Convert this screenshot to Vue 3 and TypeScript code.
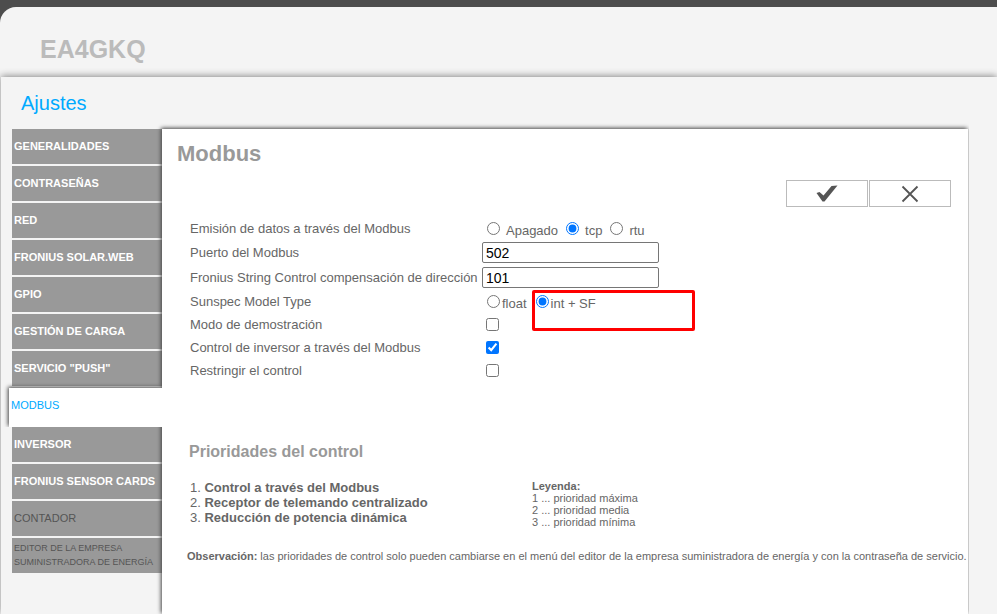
<script setup lang="ts">
import { ref } from 'vue'

interface MenuItem {
  label: string
  kind?: 'active' | 'locked' | 'small'
}

const menu: MenuItem[] = [
  { label: 'GENERALIDADES' },
  { label: 'CONTRASEÑAS' },
  { label: 'RED' },
  { label: 'FRONIUS SOLAR.WEB' },
  { label: 'GPIO' },
  { label: 'GESTIÓN DE CARGA' },
  { label: 'SERVICIO "PUSH"' },
  { label: 'MODBUS', kind: 'active' },
  { label: 'INVERSOR' },
  { label: 'FRONIUS SENSOR CARDS' },
  { label: 'CONTADOR', kind: 'locked' },
  { label: 'EDITOR DE LA EMPRESA SUMINISTRADORA DE ENERGÍA', kind: 'small' },
]

const output = ref('tcp')
const port = ref('502')
const offset = ref('101')
const model = ref('int')
const demo = ref(false)
const inverterControl = ref(true)
const restrict = ref(false)

const priorities = [
  'Control a través del Modbus',
  'Receptor de telemando centralizado',
  'Reducción de potencia dinámica',
]
const legend = ['1 ... prioridad máxima', '2 ... prioridad media', '3 ... prioridad mínima']
</script>

<template>
  <div class="sheet">
    <header class="brand">EA4GKQ</header>
    <div class="frame">
      <h1 class="page-title">Ajustes</h1>
      <div class="columns">
        <nav class="menu">
          <a v-for="item in menu" :key="item.label" href="#" class="item" :class="item.kind">{{ item.label }}</a>
        </nav>
        <main class="panel">
          <h2 class="title">Modbus</h2>
          <div class="actions">
            <button type="button" class="action" aria-label="Aceptar">
              <svg width="22" height="17" viewBox="0 0 22 17">
                <path d="M0.5 8 3.5 7 7.5 10.5 15.5 1 21.5 0.5 8.5 16.5 6.5 16.5Z" fill="#555" />
              </svg>
            </button>
            <button type="button" class="action" aria-label="Cancelar">
              <svg width="18" height="18" viewBox="0 0 18 18">
                <path d="M1.5 1.5 16.5 16.5M16.5 1.5 1.5 16.5" stroke="#555" stroke-width="1.8" fill="none" />
              </svg>
            </button>
          </div>

          <form class="form" @submit.prevent>
            <div class="row" role="radiogroup" aria-labelledby="output-label">
              <span id="output-label" class="name">Emisión de datos a través del Modbus</span>
              <div class="radios spaced">
                <label><input v-model="output" type="radio" name="output" value="off" /><span>Apagado</span></label>
                <label><input v-model="output" type="radio" name="output" value="tcp" /><span>tcp</span></label>
                <label><input v-model="output" type="radio" name="output" value="rtu" /><span>rtu</span></label>
              </div>
            </div>
            <div class="row tall">
              <label class="name" for="port">Puerto del Modbus</label>
              <input id="port" v-model="port" class="text" type="text" />
            </div>
            <div class="row tall">
              <label class="name" for="offset">Fronius String Control compensación de dirección</label>
              <input id="offset" v-model="offset" class="text" type="text" />
            </div>
            <div class="row" role="radiogroup" aria-labelledby="model-label">
              <span id="model-label" class="name">Sunspec Model Type</span>
              <div class="radios">
                <label><input v-model="model" type="radio" name="model" value="float" /><span>float</span></label>
                <label><input v-model="model" type="radio" name="model" value="int" /><span>int + SF</span></label>
                <span class="marker"></span>
              </div>
            </div>
            <div class="row">
              <label class="name" for="demo">Modo de demostración</label>
              <input id="demo" v-model="demo" class="check" type="checkbox" />
            </div>
            <div class="row">
              <label class="name" for="inverter">Control de inversor a través del Modbus</label>
              <input id="inverter" v-model="inverterControl" class="check" type="checkbox" />
            </div>
            <div class="row">
              <label class="name" for="restrict">Restringir el control</label>
              <input id="restrict" v-model="restrict" class="check" type="checkbox" />
            </div>
          </form>

          <h3 class="subtitle">Prioridades del control</h3>
          <div class="priority">
            <ol class="order">
              <li v-for="(name, i) in priorities" :key="name">{{ i + 1 }}. <b>{{ name }}</b></li>
            </ol>
            <div class="legend">
              <b>Leyenda:</b>
              <div v-for="line in legend" :key="line">{{ line }}</div>
            </div>
          </div>
          <p class="note">
            <b>Observación:</b> las prioridades de control solo pueden cambiarse en el menú del editor de la empresa
            suministradora de energía y con la contraseña de servicio.
          </p>
        </main>
      </div>
    </div>
  </div>
</template>

<style>
html {
  background: #4d4d4d;
}
body {
  overflow: hidden;
}
</style>

<style scoped>
.sheet {
  display: flex;
  flex-direction: column;
  box-sizing: border-box;
  min-height: calc(100vh - 7px);
  margin-top: 7px;
  border-top-left-radius: 16px;
  background: #f4f4f4;
  color: #666;
  font-family: 'Liberation Sans', Arial, sans-serif;
  font-size: 13px;
}
.brand {
  padding: 26px 40px 12px;
  color: #bbb;
  font-size: 25px;
  line-height: 32px;
  font-weight: bold;
}
.frame {
  display: flex;
  flex: 1;
  flex-direction: column;
  margin-left: 1px;
  background: #f4f4f4;
  box-shadow: 0 -1px 7px #888;
}
.page-title {
  margin: 0;
  padding: 14px 20px;
  color: #0af;
  font-size: 20px;
  line-height: 24px;
  font-weight: normal;
}
.columns {
  display: flex;
  flex: 1;
  padding: 0 29px 0 11px;
}
.menu {
  display: flex;
  flex-direction: column;
  flex: 0 0 150px;
}
.item {
  display: flex;
  align-items: center;
  box-sizing: border-box;
  height: 35px;
  margin-bottom: 2px;
  padding: 0 0 2px 2px;
  background: #999;
  color: #fff;
  font-size: 11px;
  font-weight: bold;
  text-decoration: none;
}
.item.active {
  position: relative;
  z-index: 1;
  height: 39px;
  margin: 0 0 0 -3px;
  padding-bottom: 6px;
  background: #fff;
  color: #0af;
  font-weight: normal;
  box-shadow: -1px -1px 4px #444;
  clip-path: inset(-6px 0 0 -6px);
}
.item.locked,
.item.small {
  color: #555;
  font-weight: normal;
}
.item.small {
  font-size: 9px;
  line-height: 14px;
}
.panel {
  flex: 1;
  min-width: 0;
  position: relative;
  background: #fff;
  box-shadow: -1px -1px 4px #444;
  clip-path: inset(-6px -1px 0 -6px);
}
.title {
  margin: 0;
  padding: 11px 15px;
  color: #999;
  font-size: 22px;
  line-height: 28px;
}
.actions {
  display: flex;
  justify-content: flex-end;
  gap: 1px;
  padding: 1px 17px 10px;
}
.action {
  display: flex;
  align-items: center;
  justify-content: center;
  width: 82px;
  height: 27px;
  padding: 0;
  border: 1px solid #bbb;
  background: #fff;
}
.form {
  padding-left: 28px;
}
.row {
  display: flex;
  align-items: center;
  height: 23px;
}
.row.tall {
  height: 25px;
}
.name {
  flex: 0 0 292px;
  white-space: nowrap;
}
.text {
  box-sizing: border-box;
  width: 177px;
  height: 21px;
  padding: 1px 3px;
  border: 1px solid #767676;
  border-radius: 2px;
  color: #000;
  font-family: inherit;
  font-size: 14px;
}
.check {
  width: 13px;
  height: 13px;
  margin: 0 4px;
}
.radios {
  position: relative;
  display: flex;
  padding: 4px 0 0 5px;
  gap: 9px;
}
.radios label {
  display: flex;
  align-items: flex-start;
  gap: 2px;
}
.radios input {
  width: 13px;
  height: 13px;
  margin: 0;
}
.radios span {
  line-height: 17px;
}
.radios.spaced {
  gap: 8px;
}
.radios.spaced label {
  gap: 6px;
}
.marker {
  position: absolute;
  top: -1px;
  left: 50px;
  box-sizing: border-box;
  width: 163px;
  height: 41px;
  border: 3px solid #f00;
  border-radius: 2px;
}
.subtitle {
  margin: 60px 27px 18px;
  color: #999;
  font-size: 16px;
  line-height: 20px;
}
.priority {
  display: flex;
  padding-left: 28px;
}
.order {
  flex: 0 0 342px;
  margin: 0;
  padding: 0;
  list-style: none;
  line-height: 15px;
}
.legend {
  font-size: 11px;
  line-height: 12px;
}
.note {
  margin: 21px 0 21px 25px;
  font-size: 11px;
  line-height: 14px;
}
@media (min-width: 990px) {
  .note {
    white-space: nowrap;
  }
}
</style>
